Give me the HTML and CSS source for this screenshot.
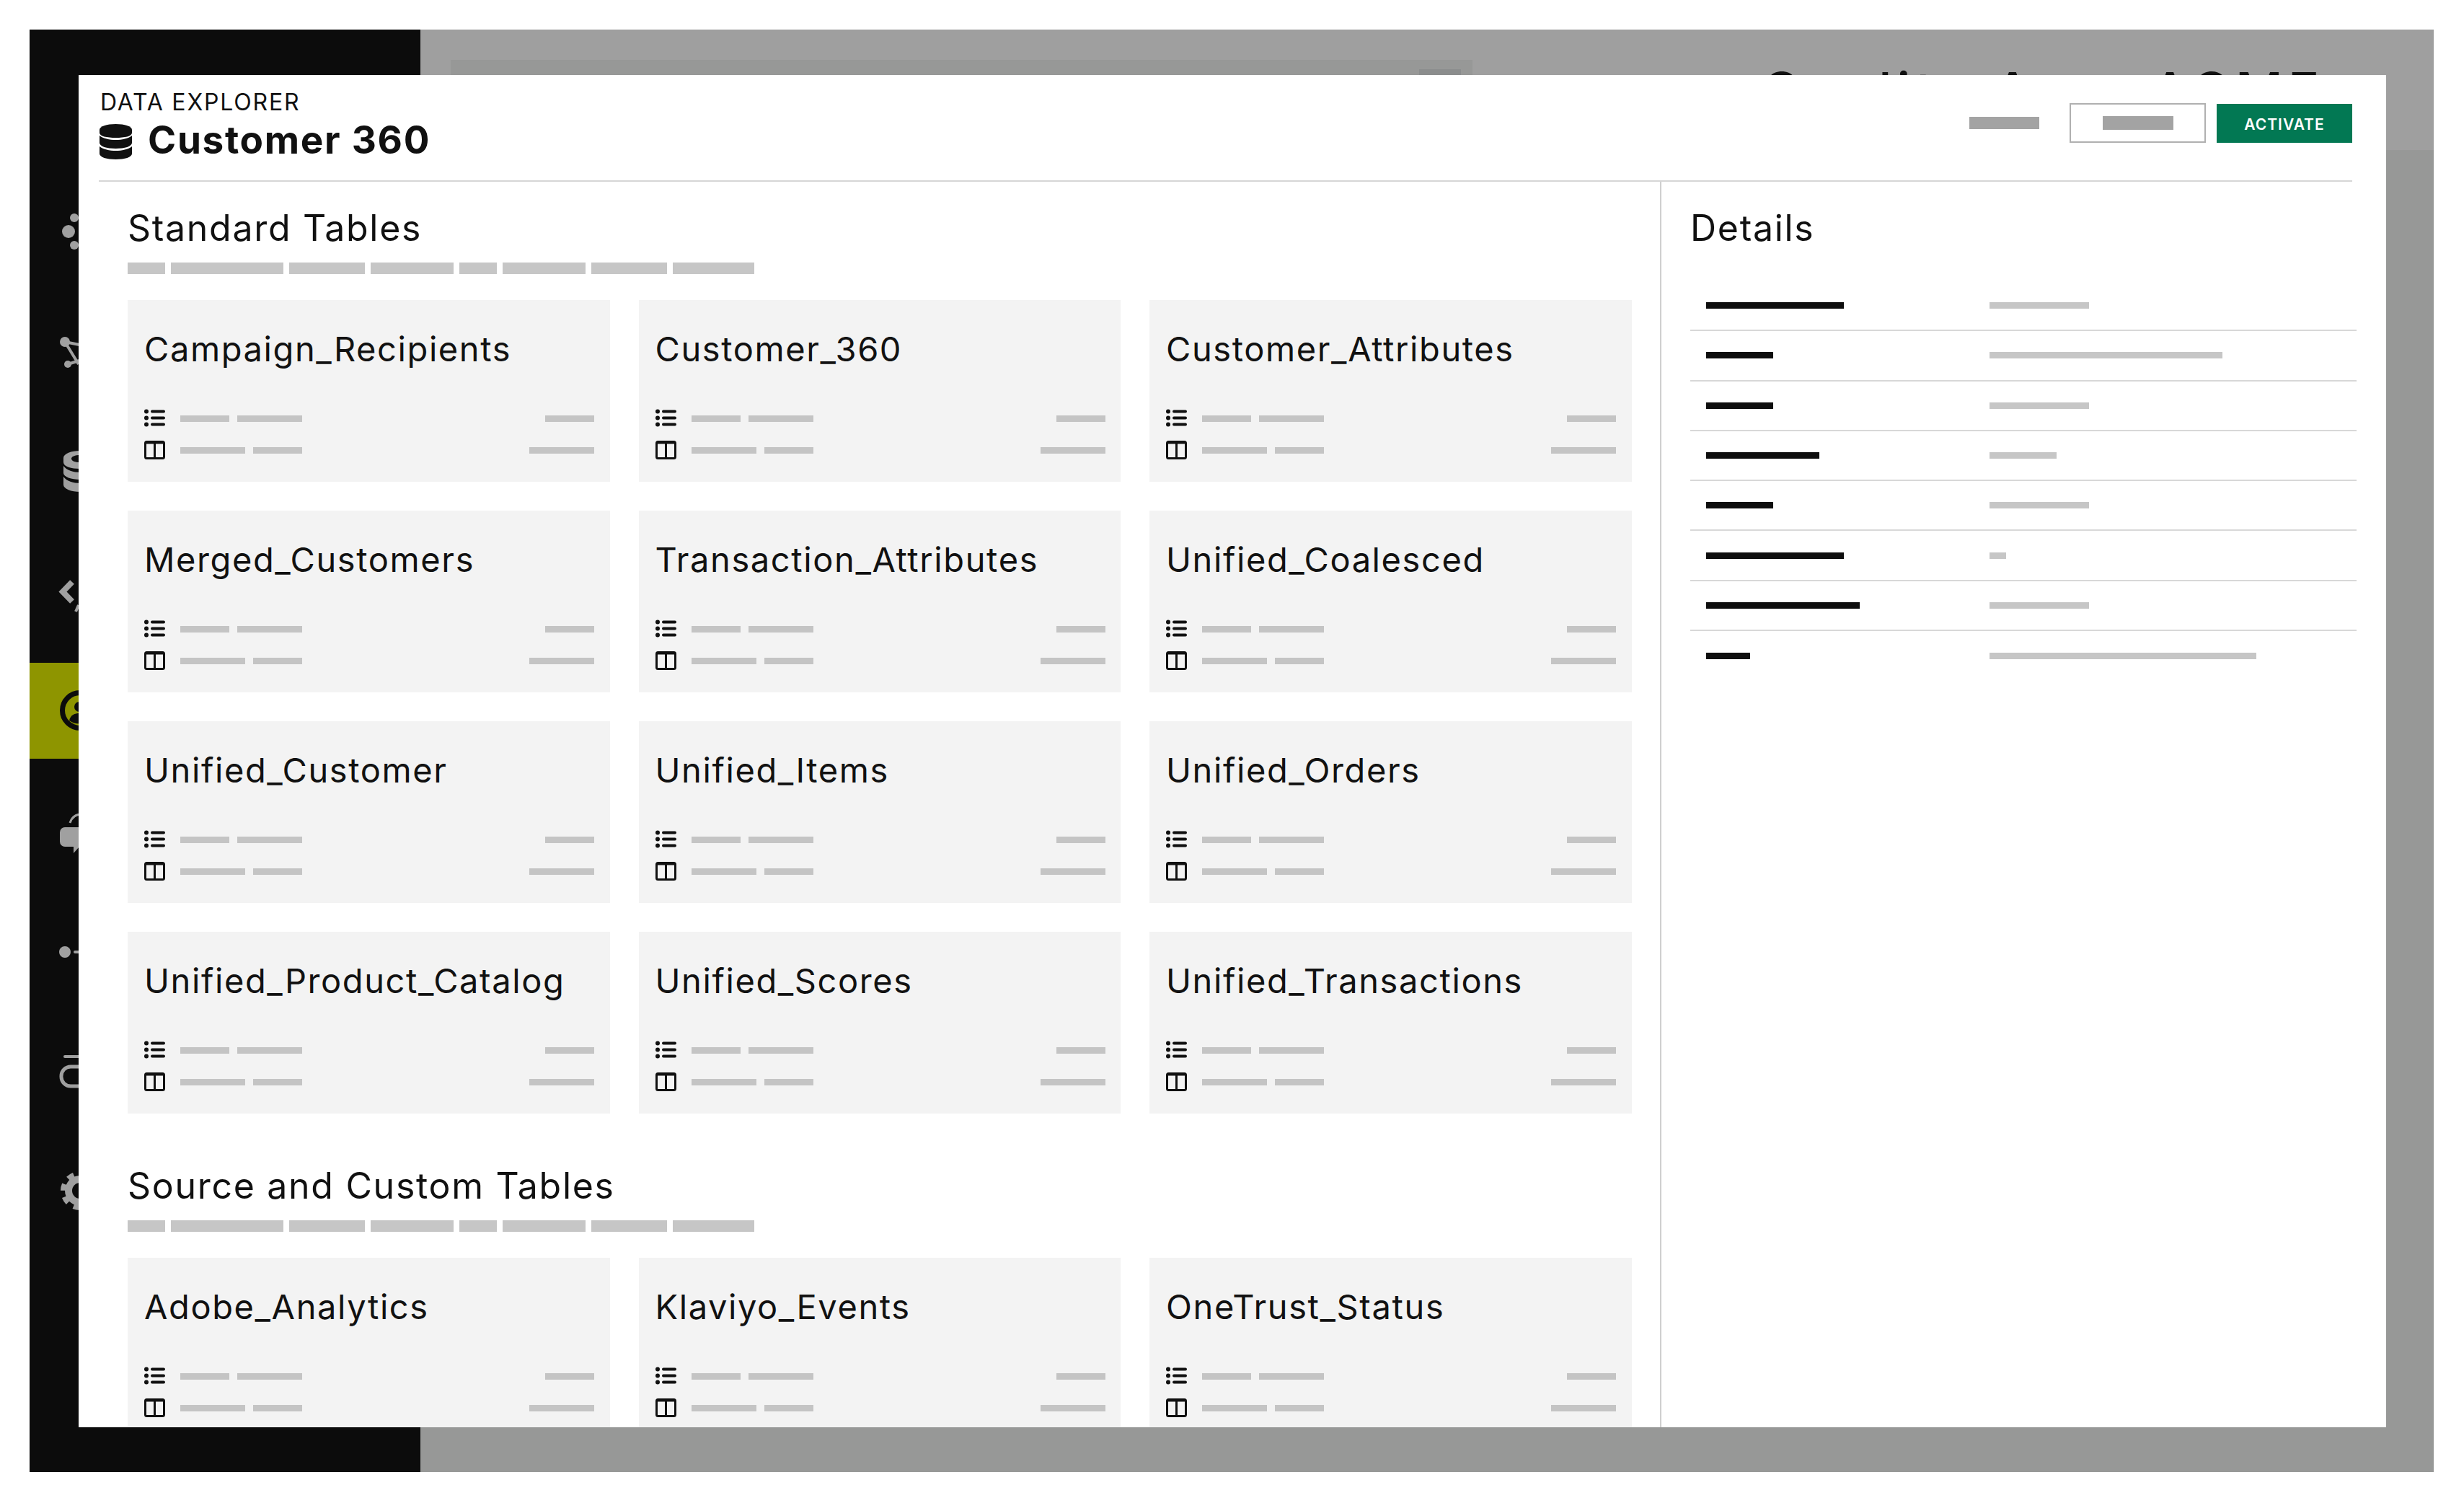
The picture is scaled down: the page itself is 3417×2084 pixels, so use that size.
FILE: index.html
```html
<!DOCTYPE html>
<html lang="en">
<head>
  <meta charset="UTF-8">
  <meta name="viewport" content="width=device-width, initial-scale=1.0">
  <title>Data Explorer - Customer 360</title>
  <link rel="stylesheet" href="styles.css">
</head>
<body>
  <svg class="sprites" width="0" height="0">
    <symbol id="icon-list" viewBox="0 0 29 25">
      <circle cx="3" cy="3" r="3"/><circle cx="3" cy="12" r="3"/><circle cx="3" cy="21" r="3"/>
      <path d="M11 3h16M11 12h16M11 21h16" fill="none" stroke="currentColor" stroke-width="4" stroke-linecap="round"/>
    </symbol>
    <symbol id="icon-table" viewBox="0 0 29 26">
      <rect x="1.5" y="1.5" width="26" height="23" rx="2" fill="none" stroke="currentColor" stroke-width="3"/>
      <path d="M1 1.5h27v3H1z"/>
      <path d="M14.5 2v22" fill="none" stroke="currentColor" stroke-width="3"/>
    </symbol>
  </svg>

  <div class="stage">
    <!-- app behind the dialog -->
    <aside class="sidebar">
      <nav class="side-nav">
        <div class="side-item">
          <svg class="side-icon" viewBox="0 0 56 56"><circle cx="12" cy="27" r="9"/><circle cx="20" cy="8" r="6"/><circle cx="20" cy="46" r="6"/></svg>
        </div>
        <div class="side-item">
          <svg class="side-icon" viewBox="0 0 56 56"><circle cx="7" cy="14" r="7"/><circle cx="11" cy="45" r="5"/><path d="M7 14l20 4M7 14l19 31M11 45l16-5" fill="none" stroke="currentColor" stroke-width="4"/></svg>
        </div>
        <div class="side-item">
          <svg class="side-icon" viewBox="0 0 56 56"><path fill-rule="evenodd" d="M5 9C5 3 16-1 28-1s23 4 23 10v6c0 6-11 9-23 9S5 21 5 15zM28 5c-7 0-12 2-12 5s5 5 12 5 12-2 12-5-5-5-12-5z"/><path d="M5 20c4 6 14 9 23 9s19-3 23-9v10c0 5-11 9-23 9S5 35 5 30z"/><path d="M5 35c4 6 14 9 23 9s19-3 23-9v11c0 6-11 10-23 10S5 52 5 46z"/></svg>
        </div>
        <div class="side-item">
          <svg class="side-icon" viewBox="0 0 56 56"><path d="M17 15L4 28.5 17 42" fill="none" stroke="currentColor" stroke-width="8"/><path d="M22 56l4-9" fill="none" stroke="currentColor" stroke-width="4"/></svg>
        </div>
        <div class="side-item side-item-active">
          <svg class="side-icon" viewBox="0 0 56 56"><circle cx="28" cy="27" r="24.5" fill="none" stroke="currentColor" stroke-width="7"/><circle cx="27" cy="22" r="7"/><path d="M13 41c2-8 8-10 14-10s12 2 14 10c-8 6-20 6-28 0z"/></svg>
        </div>
        <div class="side-item">
          <svg class="side-icon" viewBox="0 0 56 56"><path d="M7 23h42a7 7 0 0 1 7 7v13a7 7 0 0 1-7 7H27l-8 9v-9H7a7 7 0 0 1-7-7V30a7 7 0 0 1 7-7z"/><path d="M14 17C17 8 23 5 30 5" fill="none" stroke="currentColor" stroke-width="3"/></svg>
        </div>
        <div class="side-item">
          <svg class="side-icon" viewBox="0 0 56 56"><circle cx="7" cy="30" r="8"/><path d="M21 30h35" fill="none" stroke="currentColor" stroke-width="4" stroke-linecap="round"/></svg>
        </div>
        <div class="side-item">
          <svg class="side-icon" viewBox="0 0 56 56"><path d="M7 9h49" fill="none" stroke="currentColor" stroke-width="4" stroke-linecap="round"/><rect x="2" y="23" width="70" height="27" rx="13" fill="none" stroke="currentColor" stroke-width="5"/></svg>
        </div>
        <div class="side-item">
          <svg class="side-icon" viewBox="0 0 56 56"><circle cx="28" cy="29" r="21"/><circle cx="28" cy="29" r="23" fill="none" stroke="currentColor" stroke-width="8" stroke-dasharray="9 9"/><circle cx="28" cy="29" r="11" class="gear-hole"/></svg>
        </div>
      </nav>
    </aside>

    <main class="backdrop">
      <header class="topbar">
        <div class="search"><div class="search-btn"></div></div>
        <div class="top-title">Quality Area ACME</div>
      </header>
    </main>

    <!-- dialog -->
    <section class="modal">
      <header class="modal-head">
        <div>
          <div class="eyebrow">DATA EXPLORER</div>
          <h1 class="modal-title">
            <svg class="db-icon" viewBox="0 0 45 49"><path d="M0 8C0 3 10 0 22.5 0S45 3 45 8v4c0 5-10 7-22.5 7S0 17 0 12z"/><path d="M0 16c5 4 14 6 22.5 6S40 20 45 16v10c0 5-10 8-22.5 8S0 31 0 26z"/><path d="M0 31c5 4 14 6 22.5 6S40 35 45 31v10c0 5-10 8-22.5 8S0 46 0 41z"/></svg>
            Customer 360
          </h1>
        </div>
        <div class="actions">
          <div class="ghost-bar"></div>
          <button class="btn-outline" type="button"><span class="outline-bar"></span></button>
          <button class="btn-primary" type="button">ACTIVATE</button>
        </div>
      </header>

      <div class="modal-body">
        <div class="tables">
          <section class="table-group">
            <h2>Standard Tables</h2>
            <div class="words">
              <i class="w52"></i><i class="w156"></i><i class="w105"></i><i class="w115"></i><i class="w52"></i><i class="w115"></i><i class="w105"></i><i class="w113"></i>
            </div>
            <div class="card-grid">
              <article class="card">
                <h3>Campaign_Recipients</h3>
                <div class="meta"><svg class="meta-icon"><use href="#icon-list"/></svg><i class="w68"></i><i class="w90"></i><i class="end w68"></i></div>
                <div class="meta"><svg class="meta-icon"><use href="#icon-table"/></svg><i class="w90"></i><i class="w68"></i><i class="end w90"></i></div>
              </article>
              <article class="card">
                <h3>Customer_360</h3>
                <div class="meta"><svg class="meta-icon"><use href="#icon-list"/></svg><i class="w68"></i><i class="w90"></i><i class="end w68"></i></div>
                <div class="meta"><svg class="meta-icon"><use href="#icon-table"/></svg><i class="w90"></i><i class="w68"></i><i class="end w90"></i></div>
              </article>
              <article class="card">
                <h3>Customer_Attributes</h3>
                <div class="meta"><svg class="meta-icon"><use href="#icon-list"/></svg><i class="w68"></i><i class="w90"></i><i class="end w68"></i></div>
                <div class="meta"><svg class="meta-icon"><use href="#icon-table"/></svg><i class="w90"></i><i class="w68"></i><i class="end w90"></i></div>
              </article>
              <article class="card">
                <h3>Merged_Customers</h3>
                <div class="meta"><svg class="meta-icon"><use href="#icon-list"/></svg><i class="w68"></i><i class="w90"></i><i class="end w68"></i></div>
                <div class="meta"><svg class="meta-icon"><use href="#icon-table"/></svg><i class="w90"></i><i class="w68"></i><i class="end w90"></i></div>
              </article>
              <article class="card">
                <h3>Transaction_Attributes</h3>
                <div class="meta"><svg class="meta-icon"><use href="#icon-list"/></svg><i class="w68"></i><i class="w90"></i><i class="end w68"></i></div>
                <div class="meta"><svg class="meta-icon"><use href="#icon-table"/></svg><i class="w90"></i><i class="w68"></i><i class="end w90"></i></div>
              </article>
              <article class="card">
                <h3>Unified_Coalesced</h3>
                <div class="meta"><svg class="meta-icon"><use href="#icon-list"/></svg><i class="w68"></i><i class="w90"></i><i class="end w68"></i></div>
                <div class="meta"><svg class="meta-icon"><use href="#icon-table"/></svg><i class="w90"></i><i class="w68"></i><i class="end w90"></i></div>
              </article>
              <article class="card">
                <h3>Unified_Customer</h3>
                <div class="meta"><svg class="meta-icon"><use href="#icon-list"/></svg><i class="w68"></i><i class="w90"></i><i class="end w68"></i></div>
                <div class="meta"><svg class="meta-icon"><use href="#icon-table"/></svg><i class="w90"></i><i class="w68"></i><i class="end w90"></i></div>
              </article>
              <article class="card">
                <h3>Unified_Items</h3>
                <div class="meta"><svg class="meta-icon"><use href="#icon-list"/></svg><i class="w68"></i><i class="w90"></i><i class="end w68"></i></div>
                <div class="meta"><svg class="meta-icon"><use href="#icon-table"/></svg><i class="w90"></i><i class="w68"></i><i class="end w90"></i></div>
              </article>
              <article class="card">
                <h3>Unified_Orders</h3>
                <div class="meta"><svg class="meta-icon"><use href="#icon-list"/></svg><i class="w68"></i><i class="w90"></i><i class="end w68"></i></div>
                <div class="meta"><svg class="meta-icon"><use href="#icon-table"/></svg><i class="w90"></i><i class="w68"></i><i class="end w90"></i></div>
              </article>
              <article class="card">
                <h3>Unified_Product_Catalog</h3>
                <div class="meta"><svg class="meta-icon"><use href="#icon-list"/></svg><i class="w68"></i><i class="w90"></i><i class="end w68"></i></div>
                <div class="meta"><svg class="meta-icon"><use href="#icon-table"/></svg><i class="w90"></i><i class="w68"></i><i class="end w90"></i></div>
              </article>
              <article class="card">
                <h3>Unified_Scores</h3>
                <div class="meta"><svg class="meta-icon"><use href="#icon-list"/></svg><i class="w68"></i><i class="w90"></i><i class="end w68"></i></div>
                <div class="meta"><svg class="meta-icon"><use href="#icon-table"/></svg><i class="w90"></i><i class="w68"></i><i class="end w90"></i></div>
              </article>
              <article class="card">
                <h3>Unified_Transactions</h3>
                <div class="meta"><svg class="meta-icon"><use href="#icon-list"/></svg><i class="w68"></i><i class="w90"></i><i class="end w68"></i></div>
                <div class="meta"><svg class="meta-icon"><use href="#icon-table"/></svg><i class="w90"></i><i class="w68"></i><i class="end w90"></i></div>
              </article>
            </div>
          </section>

          <section class="table-group">
            <h2>Source and Custom Tables</h2>
            <div class="words">
              <i class="w52"></i><i class="w156"></i><i class="w105"></i><i class="w115"></i><i class="w52"></i><i class="w115"></i><i class="w105"></i><i class="w113"></i>
            </div>
            <div class="card-grid">
              <article class="card">
                <h3>Adobe_Analytics</h3>
                <div class="meta"><svg class="meta-icon"><use href="#icon-list"/></svg><i class="w68"></i><i class="w90"></i><i class="end w68"></i></div>
                <div class="meta"><svg class="meta-icon"><use href="#icon-table"/></svg><i class="w90"></i><i class="w68"></i><i class="end w90"></i></div>
              </article>
              <article class="card">
                <h3>Klaviyo_Events</h3>
                <div class="meta"><svg class="meta-icon"><use href="#icon-list"/></svg><i class="w68"></i><i class="w90"></i><i class="end w68"></i></div>
                <div class="meta"><svg class="meta-icon"><use href="#icon-table"/></svg><i class="w90"></i><i class="w68"></i><i class="end w90"></i></div>
              </article>
              <article class="card">
                <h3>OneTrust_Status</h3>
                <div class="meta"><svg class="meta-icon"><use href="#icon-list"/></svg><i class="w68"></i><i class="w90"></i><i class="end w68"></i></div>
                <div class="meta"><svg class="meta-icon"><use href="#icon-table"/></svg><i class="w90"></i><i class="w68"></i><i class="end w90"></i></div>
              </article>
            </div>
          </section>
        </div>

        <aside class="details">
          <h2>Details</h2>
          <div class="detail-row"><div class="detail-name"><i class="w191"></i></div><i class="w138"></i></div>
          <div class="detail-row"><div class="detail-name"><i class="w93"></i></div><i class="w323"></i></div>
          <div class="detail-row"><div class="detail-name"><i class="w93"></i></div><i class="w138"></i></div>
          <div class="detail-row"><div class="detail-name"><i class="w157"></i></div><i class="w93"></i></div>
          <div class="detail-row"><div class="detail-name"><i class="w93"></i></div><i class="w138"></i></div>
          <div class="detail-row"><div class="detail-name"><i class="w191"></i></div><i class="w23"></i></div>
          <div class="detail-row"><div class="detail-name"><i class="w213"></i></div><i class="w138"></i></div>
          <div class="detail-row"><div class="detail-name"><i class="w61"></i></div><i class="w370"></i></div>
        </aside>
      </div>
    </section>
  </div>
</body>
</html>
```

FILE: styles.css
```css
body {
  margin: 0;
  width: 3417px;
  height: 2084px;
  overflow: hidden;
  background-color: #fff;
  color: #111;
  font-family: Inter, "Liberation Sans", sans-serif;
}

.sprites {
  position: absolute;
}

.stage {
  position: relative;
  display: flex;
  width: 3334px;
  height: 2000px;
  margin: 41px;
  overflow: hidden;
}

/* sidebar */
.sidebar {
  flex: 0 0 542px;
  background-color: #0c0c0c;
  color: #a0a0a0;
}

.side-nav {
  display: flex;
  flex-direction: column;
  gap: 33px;
  padding-top: 214px;
}

.side-item {
  display: flex;
  align-items: center;
  height: 133px;
  padding-left: 42px;
}

.side-item-active {
  background-color: #8e9500;
  color: #0c0c0c;
}

.side-icon {
  width: 56px;
  height: 56px;
  fill: currentColor;
  overflow: visible;
}

.gear-hole {
  fill: #0c0c0c;
}

/* page behind the modal */
.backdrop {
  flex: 1;
  background-color: #979897;
}

.topbar {
  display: flex;
  justify-content: space-between;
  height: 167px;
  padding: 42px 151px 0 42px;
  box-sizing: border-box;
  background-color: #9f9f9f;
}

.search {
  display: flex;
  justify-content: flex-end;
  width: 1417px;
  height: 60px;
  padding: 13px 16px 0 0;
  box-sizing: border-box;
  background-color: #979897;
}

.search-btn {
  width: 58px;
  height: 40px;
  background-color: #8b8d8d;
}

/* only the tops of the letters show above the modal */
.top-title {
  height: 14px;
  margin-top: 7px;
  overflow: hidden;
  font-size: 72px;
  line-height: 72px;
  font-weight: 500;
  letter-spacing: 7.5px;
  white-space: nowrap;
}

/* modal */
.modal {
  position: absolute;
  left: 68px;
  top: 63px;
  display: flex;
  flex-direction: column;
  width: 3200px;
  height: 1875px;
  overflow: hidden;
  background-color: #fff;
}

.modal-head {
  display: flex;
  justify-content: space-between;
  flex: 0 0 auto;
  height: 148px;
  margin: 0 47px 0 28px;
  padding-top: 18px;
  box-sizing: border-box;
  border-bottom: 2px solid #d6d6d6;
}

.eyebrow {
  height: 40px;
  padding-left: 2px;
  font-size: 32px;
  line-height: 40px;
  letter-spacing: 1.8px;
}

.modal-title {
  display: flex;
  align-items: center;
  gap: 22px;
  height: 60px;
  margin: 2px 0 0;
  padding-left: 1px;
  font-size: 53px;
  line-height: 60px;
  font-weight: 700;
  letter-spacing: 1.7px;
}

.db-icon {
  width: 45px;
  height: 49px;
  margin-top: 4px;
  fill: #111;
}

.actions {
  display: flex;
  align-items: flex-start;
  padding-top: 21px;
}

.ghost-bar {
  width: 97px;
  height: 17px;
  margin: 19px 42px 0 0;
  background-color: #a3a3a3;
}

.btn-outline {
  display: flex;
  align-items: center;
  justify-content: center;
  width: 189px;
  height: 55px;
  margin-right: 15px;
  padding: 0;
  background-color: #fff;
  border: 2px solid #b0b0b0;
}

.outline-bar {
  display: block;
  width: 98px;
  height: 19px;
  background-color: #a3a3a3;
}

.btn-primary {
  width: 188px;
  height: 54px;
  margin-top: 1px;
  padding: 2px 0 0;
  border: none;
  background-color: #027853;
  color: #fff;
  font-family: inherit;
  font-size: 21px;
  font-weight: 600;
  letter-spacing: 1px;
}

.modal-body {
  display: flex;
  flex: 1;
  min-height: 0;
  margin-left: 28px;
}

.tables {
  flex: 0 0 2167px;
  box-sizing: border-box;
  padding: 36px 38px 0 40px;
  border-right: 2px solid #cfcfcf;
}

h2 {
  margin: 0;
  height: 56px;
  font-size: 50px;
  line-height: 56px;
  font-weight: 400;
  letter-spacing: 1.7px;
  white-space: nowrap;
}

.table-group + .table-group {
  margin-top: 72px;
}

.words {
  display: flex;
  gap: 8px;
  margin: 20px 0 36px;
}

.words i {
  height: 16px;
  background-color: #c6c6c6;
}

.card-grid {
  display: grid;
  grid-template-columns: repeat(3, 668.5px);
  gap: 40px;
}

.card {
  box-sizing: border-box;
  height: 252px;
  padding: 42px 21.5px 0 23px;
  background-color: #f3f3f3;
}

.card h3 {
  margin: 0 0 48px;
  height: 52px;
  font-size: 47px;
  line-height: 52px;
  font-weight: 400;
  letter-spacing: 1.6px;
  white-space: nowrap;
}

.meta {
  display: flex;
  align-items: center;
  gap: 11px;
  height: 44px;
}

.meta i {
  height: 9px;
  background-color: #c4c4c4;
}

.meta i.end {
  margin-left: auto;
}

.meta-icon {
  width: 29px;
  height: 26px;
  margin-right: 10px;
  fill: #111;
  color: #111;
}

/* details */
.details {
  flex: 1;
  box-sizing: border-box;
  padding: 36px 0 0 40px;
  margin-right: 41px;
}

.details h2 {
  margin-bottom: 46px;
}

.detail-row {
  display: flex;
  align-items: center;
  height: 69.3px;
  box-sizing: border-box;
  padding-left: 22px;
  border-bottom: 2px solid #d8d8d8;
}

.detail-row:last-child {
  border-bottom: none;
}

.detail-row > i {
  height: 9px;
  background-color: #c6c6c6;
}

.detail-name {
  flex: 0 0 393px;
}

.detail-name i {
  display: block;
  height: 9px;
  background-color: #0e0e0e;
}

/* placeholder bar widths */
.w23 { width: 23px; }
.w52 { width: 52px; }
.w61 { width: 61px; }
.w68 { width: 68px; }
.w90 { width: 90px; }
.w93 { width: 93px; }
.w105 { width: 105px; }
.w113 { width: 113px; }
.w115 { width: 115px; }
.w138 { width: 138px; }
.w156 { width: 156px; }
.w157 { width: 157px; }
.w191 { width: 191px; }
.w213 { width: 213px; }
.w323 { width: 323px; }
.w370 { width: 370px; }
```
